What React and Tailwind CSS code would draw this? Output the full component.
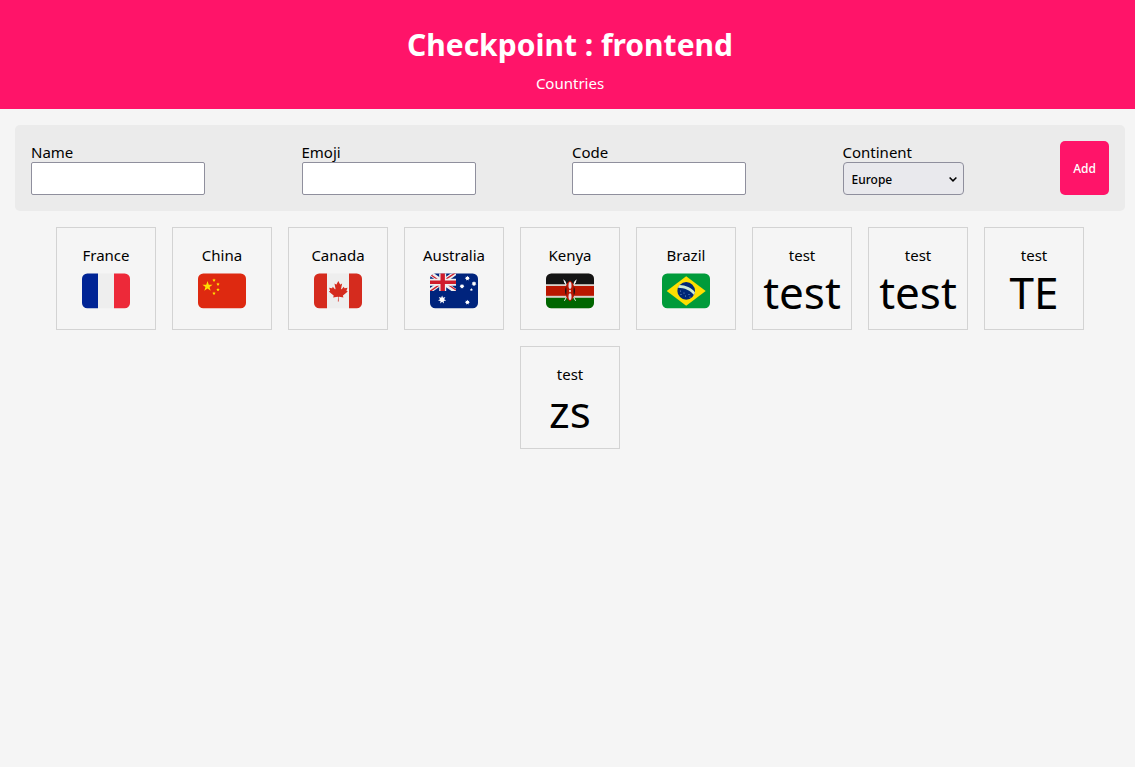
import { useState } from "react";

function starPoints(cx, cy, outer, inner, tips) {
  const points = [];
  for (let i = 0; i < tips * 2; i++) {
    const r = i % 2 === 0 ? outer : inner;
    const angle = (Math.PI * i) / tips - Math.PI / 2;
    points.push(`${(cx + r * Math.cos(angle)).toFixed(2)},${(cy + r * Math.sin(angle)).toFixed(2)}`);
  }
  return points.join(" ");
}

function Star({ x, y, r, inner = 0.4, tips = 5, fill }) {
  return <polygon points={starPoints(x, y, r, r * inner, tips)} fill={fill} />;
}

function Flag({ id, label, children }) {
  return (
    <svg viewBox="0 0 48 36" className="mt-[7px] h-9 w-12" role="img" aria-label={label}>
      <clipPath id={id}>
        <rect y="0.4" width="48" height="34.8" rx="5.3" />
      </clipPath>
      <g clipPath={`url(#${id})`}>{children}</g>
    </svg>
  );
}

const flags = {
  FR: (
    <>
      <rect width="16" height="36" fill="#002495" />
      <rect x="16" width="16" height="36" fill="#eee" />
      <rect x="32" width="16" height="36" fill="#ed2939" />
    </>
  ),
  CN: (
    <>
      <rect width="48" height="36" fill="#de2910" />
      <Star x={9.5} y={13.4} r={5.4} fill="#ffde02" />
      <Star x={16} y={7.2} r={1.8} inner={0.5} fill="#ffde02" />
      <Star x={20} y={11.2} r={1.8} inner={0.5} fill="#ffde02" />
      <Star x={20} y={16.7} r={1.8} inner={0.5} fill="#ffde02" />
      <Star x={16} y={20.4} r={1.8} inner={0.5} fill="#ffde02" />
    </>
  ),
  CA: (
    <>
      <rect width="48" height="36" fill="#eee" />
      <rect width="13" height="36" fill="#d52b1e" />
      <rect x="35" width="13" height="36" fill="#d52b1e" />
      <path
        transform="translate(24.3 18.2) scale(0.0051)"
        fill="#d52b1e"
        d="m-90 2030 45-863a95 95 0 0 0-111-98l-859 151 116-320a65 65 0 0 0-20-73l-941-762 212-99a65 65 0 0 0 34-79l-186-572 542 115a65 65 0 0 0 73-38l105-247 423 454a65 65 0 0 0 111-57l-204-1052 327 189a65 65 0 0 0 91-27l332-652 332 652a65 65 0 0 0 91 27l327-189-204 1052a65 65 0 0 0 111 57l423-454 105 247a65 65 0 0 0 73 38l542-115-186 572a65 65 0 0 0 34 79l212 99-941 762a65 65 0 0 0-20 73l116 320-859-151a95 95 0 0 0-111 98l45 863z"
      />
    </>
  ),
  AU: (
    <>
      <rect width="48" height="36" fill="#00247d" />
      <svg width="26" height="18" viewBox="0 0 26 18">
        <path d="M-1-0.5 26 18.5M-1 18.5 26-0.5" stroke="#eee" strokeWidth="4.4" />
        <path d="M0 1.2 12.5 10M26 17 12.5 8M0 18.4 12.5 9.6M26-0.6 12.5 8.4" stroke="#cf1b2b" strokeWidth="1.3" />
        <path d="M12.7 0V18M0 9.3H26" stroke="#eee" strokeWidth="7" />
        <path d="M12.7 0V18" stroke="#cf1b2b" strokeWidth="4.4" />
        <path d="M0 9.3H26" stroke="#cf1b2b" strokeWidth="3.6" />
      </svg>
      <Star x={12.1} y={26.6} r={4.2} inner={0.5} tips={7} fill="#fff" />
      <Star x={37.4} y={5.3} r={2.5} inner={0.6} tips={7} fill="#fff" />
      <Star x={44} y={10.7} r={2.5} inner={0.6} tips={7} fill="#fff" />
      <Star x={32} y={13.3} r={2.5} inner={0.6} tips={7} fill="#fff" />
      <Star x={41.4} y={16.6} r={1.6} inner={0.5} fill="#fff" />
      <Star x={37.4} y={29.3} r={2.5} inner={0.6} tips={7} fill="#fff" />
    </>
  ),
  KE: (
    <>
      <rect width="48" height="36" fill="#d9d2cb" />
      <rect width="48" height="11.2" fill="#141414" />
      <rect y="13" width="48" height="9.8" fill="#bb1600" />
      <rect y="24.8" width="48" height="12" fill="#060" />
      <path d="M18.4 27.8 29.4 9M29.6 27.8 18.6 9" stroke="#eee" strokeWidth="1" />
      <path d="M17.2 6.2c2 1 3.4 3.2 3.2 5.6-1.6-.8-2.6-3-3.2-5.6zM30.8 6.2c-2 1-3.4 3.2-3.2 5.6 1.6-.8 2.6-3 3.2-5.6z" fill="#eee" />
      <path d="M24 8.5c3 2.8 5 6 5 9.5s-2 6.7-5 9.5c-3-2.8-5-6-5-9.500s2-6.700 5-9.500z" fill="#141414" />
      <path d="M24 7.4c2.700 2 3.900 4 3.900 6-.5 3-.5 6.200 0 9.200 0 2-1.200 4-3.900 6-2.700-2-3.900-4-3.900-6 .5-3 .5-6.200 0-9.200 0-2 1.200-4 3.900-6z" fill="#bb1600" />
      <ellipse cx="24" cy="12.4" rx="1.5" ry="3.400" fill="#e4dce4" />
      <ellipse cx="24" cy="23.6" rx="1.5" ry="3.400" fill="#e4dce4" />
      <ellipse cx="24" cy="18" rx="0.9" ry="1.2" fill="#eee" />
    </>
  ),
  BR: (
    <>
      <rect width="48" height="36" fill="#009b3a" />
      <path d="M24.2 3.2 43.7 18 24.2 32.8 4.7 18z" fill="#fedf01" />
      <circle cx="24.2" cy="17.9" r="8.8" fill="#002776" />
      <path d="M16 14.8a9 9 0 0 1 1.5-2.7c6 .2 12.2 2.8 15.4 7.1a9 9 0 0 1-.9 2.9c-3.4-4.5-9.5-7.3-16-7.3z" fill="#cbe9d4" />
      <g fill="#7ea0cf">
        <circle cx="18.5" cy="18" r="0.6" />
        <circle cx="19" cy="21.5" r="0.6" />
        <circle cx="22" cy="20" r="0.6" />
        <circle cx="23.5" cy="23" r="0.6" />
        <circle cx="27" cy="21.5" r="0.6" />
        <circle cx="28" cy="24" r="0.6" />
      </g>
    </>
  ),
};

const initialCountries = [
  { name: "France", flag: "FR" },
  { name: "China", flag: "CN" },
  { name: "Canada", flag: "CA" },
  { name: "Australia", flag: "AU" },
  { name: "Kenya", flag: "KE" },
  { name: "Brazil", flag: "BR" },
  { name: "test", emoji: "test" },
  { name: "test", emoji: "test" },
  { name: "test", emoji: "TE" },
  { name: "test", emoji: "zs" },
];

function CountryCard({ name, emoji, flag }) {
  return (
    <li className="flex h-[103px] w-[100px] flex-col items-center border border-[#d3d3d3] pt-4">
      <span className="leading-[22px]">{name}</span>
      {flag ? (
        <Flag id={`flag-${flag}`} label={`Flag of ${name}`}>
          {flags[flag]}
        </Flag>
      ) : (
        <span className="text-[44px] leading-[53px]">{emoji}</span>
      )}
    </li>
  );
}

function TextField({ id, label }) {
  return (
    <div className="flex flex-col">
      <label htmlFor={id} className="h-[21px] leading-[23px]">
        {label}
      </label>
      <input
        id={id}
        name={id}
        type="text"
        className="h-[33px] w-[174px] rounded-xs border border-[#8f8f9d] bg-white px-2 text-[13px]"
      />
    </div>
  );
}

export default function App() {
  const [countries, setCountries] = useState(initialCountries);

  function addCountry(event) {
    event.preventDefault();
    const data = new FormData(event.currentTarget);
    setCountries([...countries, { name: data.get("name"), emoji: data.get("emoji") }]);
    event.currentTarget.reset();
  }

  return (
    <div className="min-h-screen bg-[#f5f5f5] font-['Noto_Sans',sans-serif] text-[15px] text-black">
      <header className="flex flex-col items-center bg-[#ff1469] pt-[23px] pb-[15px] pl-[5px] text-white">
        <h1 className="text-[30px] leading-[43px] font-bold">Checkpoint : frontend</h1>
        <p className="pt-[6px] leading-[22px]">Countries</p>
      </header>
      <main className="flex flex-col gap-4 py-4 pr-[10px] pl-[15px]">
        <form onSubmit={addCountry} className="flex justify-between rounded-[5px] bg-[#ebebeb] p-4">
          <TextField id="name" label="Name" />
          <TextField id="emoji" label="Emoji" />
          <TextField id="code" label="Code" />
          <div className="flex flex-col">
            <label htmlFor="continent" className="h-[21px] leading-[23px]">
              Continent
            </label>
            <div className="grid items-center">
              <select
                id="continent"
                name="continent"
                defaultValue="Europe"
                className="col-start-1 row-start-1 h-[33px] w-[121px] appearance-none rounded-[4px] border border-[#8f8f9d] bg-[#e9e9ed] px-2 pt-[2px] text-[12px] font-medium"
              >
                <option>Africa</option>
                <option>Asia</option>
                <option>Europe</option>
                <option>North America</option>
                <option>Oceania</option>
                <option>South America</option>
              </select>
              <svg
                viewBox="0 0 8 6"
                className="pointer-events-none col-start-1 row-start-1 mr-[7px] h-[6px] w-2 justify-self-end"
                fill="none"
                stroke="#000"
                strokeWidth="1.5"
                aria-hidden="true"
              >
                <path d="M0.6 1.5 4 4.9 7.4 1.5" />
              </svg>
            </div>
          </div>
          <button type="submit" className="w-[49px] rounded-[5px] bg-[#ff1469] pt-[2px] text-[12px] font-medium text-white">
            Add
          </button>
        </form>
        <ul className="flex flex-wrap justify-center gap-4">
          {countries.map((country, index) => (
            <CountryCard key={index} {...country} />
          ))}
        </ul>
      </main>
    </div>
  );
}
